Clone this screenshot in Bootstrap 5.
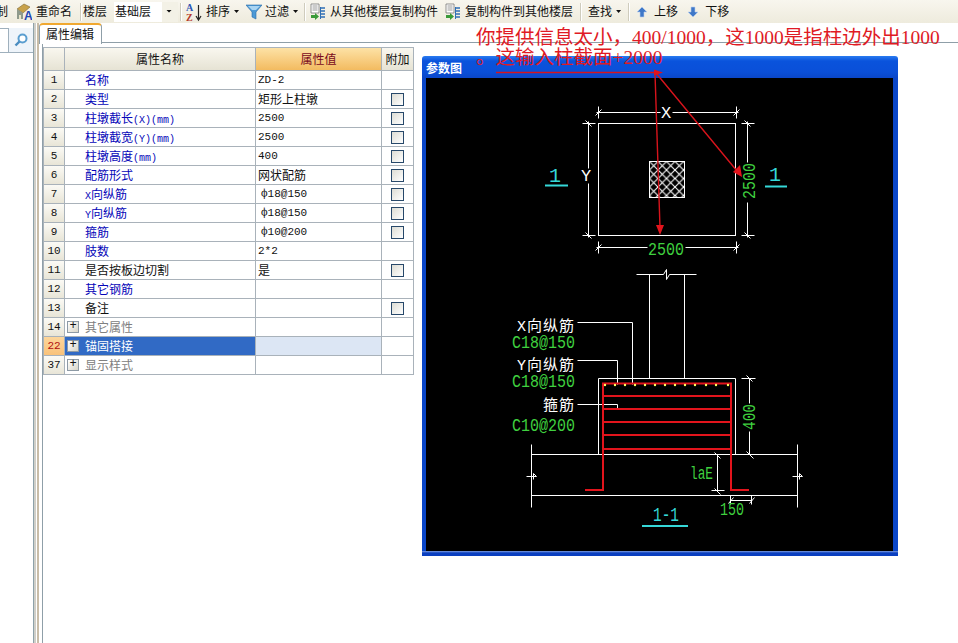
<!DOCTYPE html>
<html lang="zh">
<head>
<meta charset="utf-8">
<title>属性编辑</title>
<link href="https://cdn.jsdelivr.net/npm/bootstrap@5.3.0/dist/css/bootstrap.min.css" rel="stylesheet">
<style>
html,body{margin:0;height:100%;background:#fff}
body{width:958px;height:643px;overflow:hidden;position:relative;font:12px/1.2 "Noto Sans CJK SC","Liberation Sans",sans-serif;color:#111}
.ribbon{height:23px;background:linear-gradient(#f8f6ee,#eeebdd);white-space:nowrap}
.ribbon svg{display:block;flex:none}
.cut{width:8px;height:15px;overflow:hidden;direction:rtl;flex:none}
.combo{width:64px;height:20px;line-height:18px;padding-left:1px;position:relative;background:linear-gradient(90deg,#fff 48px,#f3f1e6 48px);flex:none}
.combo-txt{display:block}
.tri{width:5px;height:3px;flex:none;background:linear-gradient(#111,#111);clip-path:polygon(0 0,100% 0,50% 100%)}
.vsep{width:2px;height:18px;background:linear-gradient(90deg,#cfccbd 50%,#fff 50%);flex:none}
.m1{margin-left:1px}.m2{margin-left:2px}.m3{margin-left:3px}.m4{margin-left:4px}.m6{margin-left:6px}.m7{margin-left:7px}.m8{margin-left:8px}.m10{margin-left:10px}
.combo-arrow{position:absolute;left:52px;top:8px;width:6px}
.work{height:620px}
.leftpane{width:33px;flex:none;background:#fff}
.searchrow{margin-top:5px;height:25px;border-bottom:1px solid #9fb0bd;background:#eef4fa}
.searchinput{width:9px;background:#fff;border:1px solid #9fb0bd;border-left:0;border-bottom:0}
.splitbar{width:6px;flex:none;background:linear-gradient(90deg,#8ea2aa 0,#8ea2aa 1px,#d0cfc8 1px,#d0cfc8 3px,#fff 3px,#fff 4px,#c9bda8 4px,#c9bda8 6px)}
.mainpane{flex:1 1 auto;min-width:0}
.tabstrip{height:20px;border-bottom:1px solid #8f9fa8;position:relative}
.tabcap{width:63px;height:21px;background:#fff;border:1px solid #8f9fa8;border-top:2px solid #f0a830;border-bottom:0;border-radius:4px 4px 0 0;padding-left:6px;line-height:17px;font-size:12px;position:relative}
.panelbody{margin-left:3px;border-left:1px solid #8f9fa8;height:600px;padding-top:4px}
.c-i{width:22px}.c-n{width:191px}.c-v{width:126px}.c-a{width:32px}
.prop-grid{width:371px;table-layout:fixed;border-collapse:separate;border-spacing:0;margin:0;border-top:1px solid #aab4bc;border-left:0}
.table.prop-grid>thead>tr>th,.table.prop-grid>tbody>tr>td{padding:0;height:19px;line-height:18px;font-size:12px;font-weight:400;border:0;border-right:1px solid #a9b2ba;border-bottom:1px solid #a9b2ba;box-shadow:none;background:#fff;white-space:nowrap;overflow:hidden;color:#111;vertical-align:top}
.table.prop-grid>thead>tr>th{height:23px;line-height:21px;text-align:center;background:linear-gradient(#f9f7ef,#e6e3d4)}
.table.prop-grid>thead>tr>th.hd-val{background:linear-gradient(#fde2a6,#f3bb60);color:#7a0a20}
.table.prop-grid>tbody>tr>td.idx{text-align:center;background:linear-gradient(#fbfaf5,#e8e5d7);font-size:11px;font-family:"Liberation Mono",monospace;border-left:1px solid #a9b2ba}
.table.prop-grid>thead>tr>th:first-child{border-left:1px solid #a9b2ba}
.table.prop-grid>tbody>tr>td.nm{padding-left:20px}
.table.prop-grid>tbody>tr>td.blue{color:#0505b8}
.table.prop-grid>tbody>tr>td.mute{color:#808080;padding-left:1px}
.table.prop-grid>tbody>tr>td.val{padding-left:2px}
.table.prop-grid>tbody>tr>td.mono{font-family:"Liberation Mono",monospace;font-size:11px}
.table.prop-grid>tbody>tr>td.bar{padding-left:5px;font-family:"Liberation Mono",monospace;font-size:11px}
.table.prop-grid>tbody>tr>td.sel-n{background:#316ac5;color:#fff;padding-left:1px}
.table.prop-grid>tbody>tr>td.sel-v{background:#dce6f4}
.table.prop-grid>tbody>tr>td.sel-i{background:linear-gradient(#fdd69b,#f9c27a);color:#b01010}
.mini{font-family:"Liberation Mono",monospace;font-size:10px;line-height:1}
.box{display:block;width:13px;height:13px;margin:3px 0 0 9px;border:1px solid #27486a;background:linear-gradient(135deg,#dcdcd4,#fff)}
.rowline{height:18px}
.plus{width:12px;height:12px;flex:none;border:1px solid #8d9aa5;background:linear-gradient(135deg,#fff,#d8d5c8);color:#111;text-align:center;line-height:9px;font-size:12px;font-family:"Liberation Mono",monospace;margin:0 6px 0 1px}
.cadwin{position:absolute;left:422px;top:56px;width:476px;height:500px;background:linear-gradient(#2a7bf0 0,#0a53dc 5px,#0a4fd8 16px,#0a46c8 22px);border-radius:3px 3px 0 0;padding:22px 5px 5px 4px}
.cadwin::after{content:"";position:absolute;left:0;right:0;bottom:0;height:5px;background:linear-gradient(#7f9fe0 0,#0a3fc0 2px)}
.cadwin::before{content:"";position:absolute;left:0;right:0;top:22px;bottom:0;background:#0a46c8}
.cadtitle{position:absolute;left:4px;top:4px;color:#fff;font-weight:700;font-size:12px;line-height:16px}
.cadview{display:block;width:467px;height:473px;background:#000;position:relative;z-index:1}
.notes{position:absolute;left:476px;top:28px;color:#e01a24;font:19.5px/20px "Liberation Serif","Noto Sans CJK SC",serif;white-space:nowrap;z-index:3}
.redink{position:absolute;left:0;top:0;width:958px;height:643px;z-index:2;pointer-events:none}
.cad-w{fill:#fff;font:15px "Liberation Mono","Noto Sans CJK SC",monospace}
.cad-l{fill:#fff;font:17px "Liberation Mono",monospace}
.cad-g{fill:#3fd03f;font:18px "Liberation Mono",monospace}
.cad-c{fill:#35d8d8;font:20px "Liberation Mono",monospace}
</style>
</head>
<body>
<div class="ribbon d-flex align-items-center">
  <span class="cut">制</span>
  <svg class="m8" width="16" height="18" viewBox="0 0 16 18"><path d="M1 6 8 1l6 3-7 6z" fill="#c9a24a" stroke="#7d6a35" stroke-width=".6"/><path d="M1 6v10h6V10z" fill="#8f9a8c"/><path d="M3 12h2v4H3z" fill="#e8e4c8"/><text x="8" y="17" font-family="Liberation Sans" font-weight="700" font-size="12" fill="#1c45b5">A</text></svg>
  <span class="m4">重命名</span>
  <span class="vsep m8"></span>
  <span class="m1">楼层</span>
  <span class="combo m7"><span class="combo-txt">基础层</span><span class="tri combo-arrow"></span></span>
  <span class="vsep m2"></span>
  <svg class="m3" width="18" height="20" viewBox="0 0 18 20"><text x="1" y="9" font-family="Liberation Serif" font-weight="700" font-size="10" fill="#2b55b5">A</text><text x="1" y="19" font-family="Liberation Serif" font-weight="700" font-size="10" fill="#b5392b">Z</text><path d="M13.500 3v14M11 14l2.500 4 2.500-4" stroke="#222" stroke-width="1.200" fill="none"/></svg>
  <span class="m3">排序</span>
  <span class="tri m4"></span>
  <svg class="m7" width="16" height="16" viewBox="0 0 16 16"><path d="M0 1h16l-6 7v7l-4-2V8z" fill="#4d9ad6" stroke="#2a6ca8" stroke-width=".6"/><path d="M2 2h12l-4 4H6z" fill="#a9d4f2"/></svg>
  <span class="m3">过滤</span>
  <span class="tri m4"></span>
  <span class="vsep m6"></span>
  <svg class="m4" width="16" height="18" viewBox="0 0 16 18"><path d="M1 1h8v9H1z" fill="#fff" stroke="#777" stroke-width=".8"/><path d="M2.500 3h5M2.500 5h5M2.500 7h5" stroke="#999"/><path d="M1 12h4v-2l4 3.500L5 17v-2H1z" fill="#3a9a3a"/><path d="M11 5h4M11 8h4M11 11h4M11 14h4" stroke="#2f6fb5" stroke-width="1.500"/><path d="M10.500 4v12" stroke="#2f6fb5"/></svg>
  <span class="m4">从其他楼层复制构件</span>
  <svg class="m7" width="16" height="18" viewBox="0 0 16 18"><path d="M1 1h8v9H1z" fill="#fff" stroke="#777" stroke-width=".8"/><path d="M2.500 3h5M2.500 5h5M2.500 7h5" stroke="#999"/><path d="M1 12h4v-2l4 3.500L5 17v-2H1z" fill="#3a9a3a"/><path d="M11 5h4M11 8h4M11 11h4M11 14h4" stroke="#2f6fb5" stroke-width="1.500"/><path d="M10.500 4v12" stroke="#2f6fb5"/></svg>
  <span class="m4">复制构件到其他楼层</span>
  <span class="vsep m7"></span>
  <span class="m6">查找</span>
  <span class="tri m4"></span>
  <span class="vsep m7"></span>
  <svg class="m7" width="10" height="12" viewBox="0 0 10 12"><path d="M5 1l5 5H7v5H3V6H0z" fill="#3f78c8" stroke="#bcd2ee" stroke-width=".6"/></svg>
  <span class="m7">上移</span>
  <svg class="m10" width="10" height="12" viewBox="0 0 10 12"><path d="M5 11 0 6h3V1h4v5h3z" fill="#3f78c8" stroke="#bcd2ee" stroke-width=".6"/></svg>
  <span class="m7">下移</span>
</div>

<div class="work d-flex">
  <div class="leftpane">
    <div class="searchrow d-flex">
      <div class="searchinput"></div>
      <div class="flex-grow-1 d-flex align-items-center justify-content-center">
        <svg width="14" height="14" viewBox="0 0 14 14"><circle cx="8.500" cy="5.500" r="4" fill="#fff" stroke="#5a9ed0" stroke-width="2"/><path d="M5.500 8.500 1.500 12.500" stroke="#4a8cc0" stroke-width="2.400"/></svg>
      </div>
    </div>
  </div>
  <div class="splitbar"></div>
  <div class="mainpane">
    <div class="tabstrip"><div class="tabcap">属性编辑</div></div>
    <div class="panelbody">
      <table class="table prop-grid">
        <colgroup><col class="c-i"><col class="c-n"><col class="c-v"><col class="c-a"></colgroup>
        <thead><tr><th></th><th>属性名称</th><th class="hd-val">属性值</th><th>附加</th></tr></thead>
        <tbody>
          <tr><td class="idx">1</td><td class="nm blue">名称</td><td class="val mono">ZD-2</td><td></td></tr>
          <tr><td class="idx">2</td><td class="nm blue">类型</td><td class="val">矩形上柱墩</td><td><span class="box"></span></td></tr>
          <tr><td class="idx">3</td><td class="nm blue">柱墩截长<span class="mini">(X)(mm)</span></td><td class="val mono">2500</td><td><span class="box"></span></td></tr>
          <tr><td class="idx">4</td><td class="nm blue">柱墩截宽<span class="mini">(Y)(mm)</span></td><td class="val mono">2500</td><td><span class="box"></span></td></tr>
          <tr><td class="idx">5</td><td class="nm blue">柱墩高度<span class="mini">(mm)</span></td><td class="val mono">400</td><td><span class="box"></span></td></tr>
          <tr><td class="idx">6</td><td class="nm blue">配筋形式</td><td class="val">网状配筋</td><td><span class="box"></span></td></tr>
          <tr><td class="idx">7</td><td class="nm blue"><span class="mini">X</span>向纵筋</td><td class="bar">ф18@150</td><td><span class="box"></span></td></tr>
          <tr><td class="idx">8</td><td class="nm blue"><span class="mini">Y</span>向纵筋</td><td class="bar">ф18@150</td><td><span class="box"></span></td></tr>
          <tr><td class="idx">9</td><td class="nm blue">箍筋</td><td class="bar">ф10@200</td><td><span class="box"></span></td></tr>
          <tr><td class="idx">10</td><td class="nm blue">肢数</td><td class="val mono">2*2</td><td></td></tr>
          <tr><td class="idx">11</td><td class="nm">是否按板边切割</td><td class="val">是</td><td><span class="box"></span></td></tr>
          <tr><td class="idx">12</td><td class="nm blue">其它钢筋</td><td class="val"></td><td></td></tr>
          <tr><td class="idx">13</td><td class="nm">备注</td><td class="val"></td><td><span class="box"></span></td></tr>
          <tr><td class="idx">14</td><td class="mute"><div class="rowline d-flex align-items-center"><span class="plus">+</span>其它属性</div></td><td class="val"></td><td></td></tr>
          <tr><td class="idx sel-i">22</td><td class="sel-n"><div class="rowline d-flex align-items-center"><span class="plus">+</span>锚固搭接</div></td><td class="sel-v"></td><td></td></tr>
          <tr><td class="idx">37</td><td class="mute"><div class="rowline d-flex align-items-center"><span class="plus">+</span>显示样式</div></td><td class="val"></td><td></td></tr>
        </tbody>
      </table>
    </div>
  </div>
</div>

<div class="cadwin">
  <div class="cadtitle">参数图</div>
  <svg class="cadview" viewBox="426 78 467 473">
    <defs>
      <pattern id="hatch" width="8.500" height="8.500" patternUnits="userSpaceOnUse" x="649" y="161">
        <path d="M0 0 8.500 8.500M8.500 0 0 8.500" stroke="#fff" stroke-width="1.100"/>
      </pattern>
    </defs>
    <g transform="translate(.5 .5)" stroke="#fff" stroke-width="1" fill="none">
      <rect x="598" y="123" width="137" height="112"/>
      <rect x="649" y="161" width="35" height="36" fill="url(#hatch)"/>
      <path d="M596 112H660M672 112H738M598 106v12M736 106v12M595 115l6-6M733 115l6-6"/>
      <path d="M588 121V168M588 183V237M582 123h13M582 235h13M585 120l6 6M585 232l6 6"/>
      <path d="M596 247H647M685 247H738M598 241v12M736 241v12M595 250l6-6M733 250l6-6"/>
      <path d="M747 121V162M747 202V237M741 123h13M741 235h13M744 120l6 6M744 232l6 6"/>
      <path d="M636 274H663M669 274H696M663 274l3-5 0 10 3-5M649 274V378M684 274V378"/>
      <path d="M598 454V378H735V454"/>
      <path d="M531 454H797M531 495H797M531 444V507M797 444V507M526 476h10l-3-3 0 6M792 476h10l-3-3 0 6"/>
      <path d="M577 322H632V384M577 360H617V384M577 404H617V409"/>
      <path d="M749 378V403M749 431V454M741 378h14M746 375l6 6M746 451l7 7"/>
      <path d="M717 454V491M711 490h13M714 452l6 6M714 488l6 6"/>
      <path d="M730 500H751M730 495v9M751 495v9M728 503l5-6M749 503l5-6"/>
    </g>
    <g stroke="#e2141c" stroke-width="2" fill="none">
      <path d="M585 490H603V383.500H731V490H749"/>
      <path d="M603 396H731M603 409H731M603 422H731M603 435H731M603 449H731"/>
    </g>
    <g fill="#ffff60">
      <circle cx="605" cy="385" r="1.200"/><circle cx="615" cy="385" r="1.200"/><circle cx="625" cy="385" r="1.200"/><circle cx="635" cy="385" r="1.200"/><circle cx="645" cy="385" r="1.200"/><circle cx="655" cy="385" r="1.200"/><circle cx="665" cy="385" r="1.200"/><circle cx="675" cy="385" r="1.200"/><circle cx="685" cy="385" r="1.200"/><circle cx="695" cy="385" r="1.200"/><circle cx="706" cy="385" r="1.200"/><circle cx="716" cy="385" r="1.200"/><circle cx="728" cy="385" r="1.200"/>
    </g>
    <path d="M545 185.500H568M765 186.500H787M642 526H688" stroke="#35d8d8" stroke-width="2" fill="none"/>
    <text class="cad-l" x="666" y="118" text-anchor="middle">X</text>
    <text class="cad-l" x="586" y="181" text-anchor="middle">Y</text>
    <text class="cad-c" x="555" y="182" text-anchor="middle">1</text>
    <text class="cad-c" x="775" y="181" text-anchor="middle">1</text>
    <text class="cad-g" x="648" y="255" textLength="36" lengthAdjust="spacingAndGlyphs">2500</text>
    <text class="cad-g" transform="translate(755 199) rotate(-90)" textLength="36" lengthAdjust="spacingAndGlyphs">2500</text>
    <text class="cad-w" x="575" y="331" text-anchor="end" letter-spacing="1">X向纵筋</text>
    <text class="cad-g" x="512" y="348" textLength="63" lengthAdjust="spacingAndGlyphs">C18@150</text>
    <text class="cad-w" x="575" y="370" text-anchor="end" letter-spacing="1">Y向纵筋</text>
    <text class="cad-g" x="512" y="387" textLength="63" lengthAdjust="spacingAndGlyphs">C18@150</text>
    <text class="cad-w" x="575" y="410" text-anchor="end" letter-spacing="1">箍筋</text>
    <text class="cad-g" x="512" y="431" textLength="63" lengthAdjust="spacingAndGlyphs">C10@200</text>
    <text class="cad-g" transform="translate(755 430) rotate(-90)" textLength="26" lengthAdjust="spacingAndGlyphs">400</text>
    <text class="cad-g" x="690" y="479" textLength="23" lengthAdjust="spacingAndGlyphs">laE</text>
    <text class="cad-g" x="720" y="515" textLength="24" lengthAdjust="spacingAndGlyphs">150</text>
    <text class="cad-c" x="653" y="521" textLength="26" lengthAdjust="spacingAndGlyphs">1-1</text>
  </svg>
</div>

<svg class="redink" viewBox="0 0 958 643">
  <g stroke="#d8141c" stroke-width="1.400" fill="none">
    <path d="M496 72.500H656M655 73 660 228M656 73 737 171"/>
  </g>
  <g fill="#e2141c">
    <path d="M663 72.500 654 69.500V75.500Z"/>
    <path d="M660 235 656 225H664Z"/>
    <path d="M742 177 733 172 740 165Z"/>
  </g>
</svg>
<div class="notes">你提供信息太小，400/1000，这1000是指柱边外出1000<br>。这输入柱截面+2000</div>

<script src="https://cdn.jsdelivr.net/npm/bootstrap@5.3.0/dist/js/bootstrap.bundle.min.js"></script>
</body>
</html>
